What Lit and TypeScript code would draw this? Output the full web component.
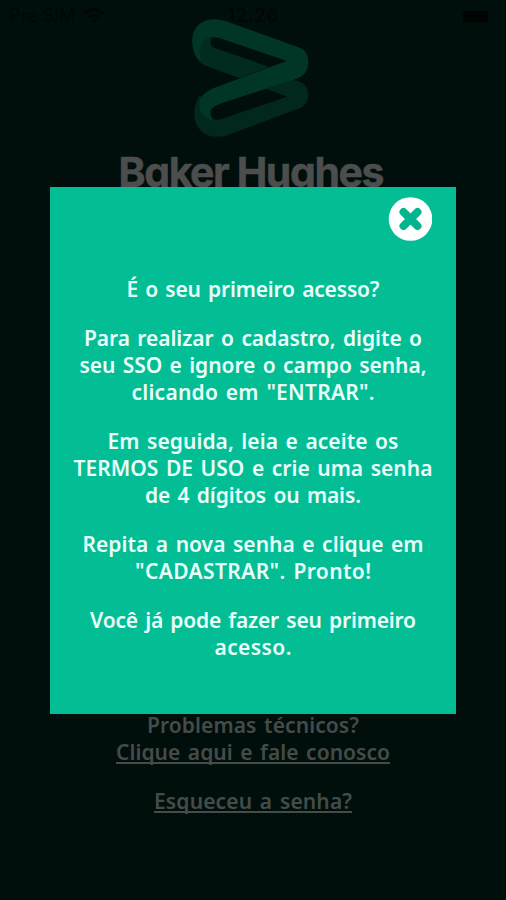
import { LitElement, html, css } from "lit";
import { customElement, property } from "lit/decorators.js";

/** One line of text, tracked out to a fixed measure. */
@customElement("fit-line")
class FitLine extends LitElement {
  @property() text = "";
  @property({ type: Number }) measure = 0;

  static styles = css`
    :host { display: flex; justify-content: center; white-space: pre; }
    .line { display: inline-block; }
  `;

  render() {
    return html`<span class="line">${this.text}</span>`;
  }

  updated() {
    const line = this.renderRoot.querySelector<HTMLElement>(".line")!;
    line.style.letterSpacing = "0px";
    const gap = (this.measure - line.getBoundingClientRect().width) / (this.text.length - 1);
    line.style.letterSpacing = gap + "px";
    line.style.marginRight = -gap + "px";
  }
}

type Line = [string, number];

const paragraphs: Line[][] = [
  [["É o seu primeiro acesso?", 253]],
  [
    ["Para realizar o cadastro, digite o", 338],
    ["seu SSO e ignore o campo senha,", 347],
    ['clicando em "ENTRAR".', 243],
  ],
  [
    ["Em seguida, leia e aceite os", 291],
    ["TERMOS DE USO e crie uma senha", 359],
    ["de 4 dígitos ou mais.", 216],
  ],
  [
    ["Repita a nova senha e clique em", 341],
    ['"CADASTRAR". Pronto!', 236],
  ],
  [
    ["Você já pode fazer seu primeiro", 326],
    ["acesso.", 77],
  ],
];

@customElement("app-root")
class AppRoot extends LitElement {
  static styles = css`
    :host {
      display: block;
      position: relative;
      height: 900px;
      overflow: hidden;
      background: #010f0c;
      font: 600 21px/27px "Noto Sans", sans-serif;
      word-spacing: 2px;
    }
    .status {
      display: grid;
      grid-template-columns: 1fr auto 1fr;
      align-items: center;
      height: 32px;
      padding: 0 18px 0 9px;
      font: 400 18px/32px "Inter", sans-serif;
      word-spacing: 0;
      color: #000705;
    }
    .carrier { display: flex; align-items: center; gap: 8px; width: 0; white-space: nowrap; }
    .carrier svg { flex: none; }
    .clock { font-weight: 600; font-size: 19px; letter-spacing: 0.3px; margin-left: 9px; }
    .battery { justify-self: end; width: 25px; height: 11px; border-radius: 2px; background: #000403; }
    .brand { display: flex; flex-direction: column; align-items: center; margin-top: -22px; }
    .mark { display: block; width: 140px; height: 140px; margin-right: 6px; }
    .name {
      font: 700 41px/50px "Inter", sans-serif;
      font-feature-settings: "cv11" 1;
      word-spacing: 0;
      color: #4b4e4d;
      margin: -3px 3px 0 0;
      -webkit-text-stroke: 0.5px #4b4e4d;
    }
    .links { position: absolute; left: 0; right: 0; top: 712px; color: #444b49; }
    .link { text-decoration: underline; text-decoration-skip-ink: none; text-decoration-thickness: 2px; text-underline-offset: 2px; }
    .forgot { margin-top: 22px; }
    .modal {
      position: absolute;
      left: 50px;
      top: 187px;
      width: 406px;
      height: 527px;
      box-sizing: border-box;
      background: #03bd94;
      color: #e9fffa;
      display: flex;
      flex-direction: column;
      padding-top: 10px;
    }
    .close { align-self: flex-end; width: 44px; height: 44px; margin-right: 24px; }
    .close svg { display: block; }
    .copy { display: flex; flex-direction: column; gap: 22px; margin-top: 35px; }
  `;

  render() {
    return html`
      <div class="status">
        <div class="carrier">
          <span>Pre SIM</span>
          <svg width="22" height="17" viewBox="0 0 22 17" fill="none" stroke="#000705" stroke-width="3.4">
            <path d="M1 6Q11-3 21 6M5 10Q11 4.500 17 10" />
            <path d="M8 12Q11 9.500 14 12L11 15Z" fill="#000705" stroke="none" />
          </svg>
        </div>
        <div class="clock">12:26</div>
        <div class="battery"></div>
      </div>
      <div class="brand">
        <svg class="mark" viewBox="0 0 420 420">
          <path fill="#012b20" d="M42 75Q35 115 48 140Q58 160 80 168L177 204L268 171L98 112Q86 100 96 82L70 78Z" />
          <path fill="#01271e" d="M60 255C40 285 39 320 49 343C63 373 95 388 137 377L350 298C375 290 386 275 384 248C382 222 358 210 335 210L258 236L322 260L122 328C100 333 90 320 92 303Z" />
          <path fill="#013627" d="M52 145C30 110 30 62 62 40C87 22 120 26 150 38L355 112C376 119 385 134 385 155C385 180 375 195 350 206L125 280C98 289 84 302 93 320L101 332C76 327 56 309 58 280C60 254 84 240 112 230L320 153L118 84C78 73 46 98 64 152Z" />
        </svg>
        <div class="name"><fit-line text="Baker Hughes" .measure=${266}></fit-line></div>
      </div>
      <div class="links">
        <fit-line text="Problemas técnicos?" .measure=${212}></fit-line>
        <fit-line class="link" text="Clique aqui e fale conosco" .measure=${274}></fit-line>
        <fit-line class="link forgot" text="Esqueceu a senha?" .measure=${198}></fit-line>
      </div>
      <div class="modal">
        <div class="close">
          <svg width="44" height="44" viewBox="0 0 44 44">
            <circle cx="22.500" cy="22" r="21.800" fill="#fff" />
            <path d="M15.500 15L29.500 29M29.500 15L15.500 29" stroke="#03b58e" stroke-width="8" stroke-linecap="round" />
          </svg>
        </div>
        <div class="copy">
          ${paragraphs.map(
            (lines) => html`<div class="para">
              ${lines.map(([t, w]) => html`<fit-line .text=${t} .measure=${w}></fit-line>`)}
            </div>`
          )}
        </div>
      </div>
    `;
  }
}
